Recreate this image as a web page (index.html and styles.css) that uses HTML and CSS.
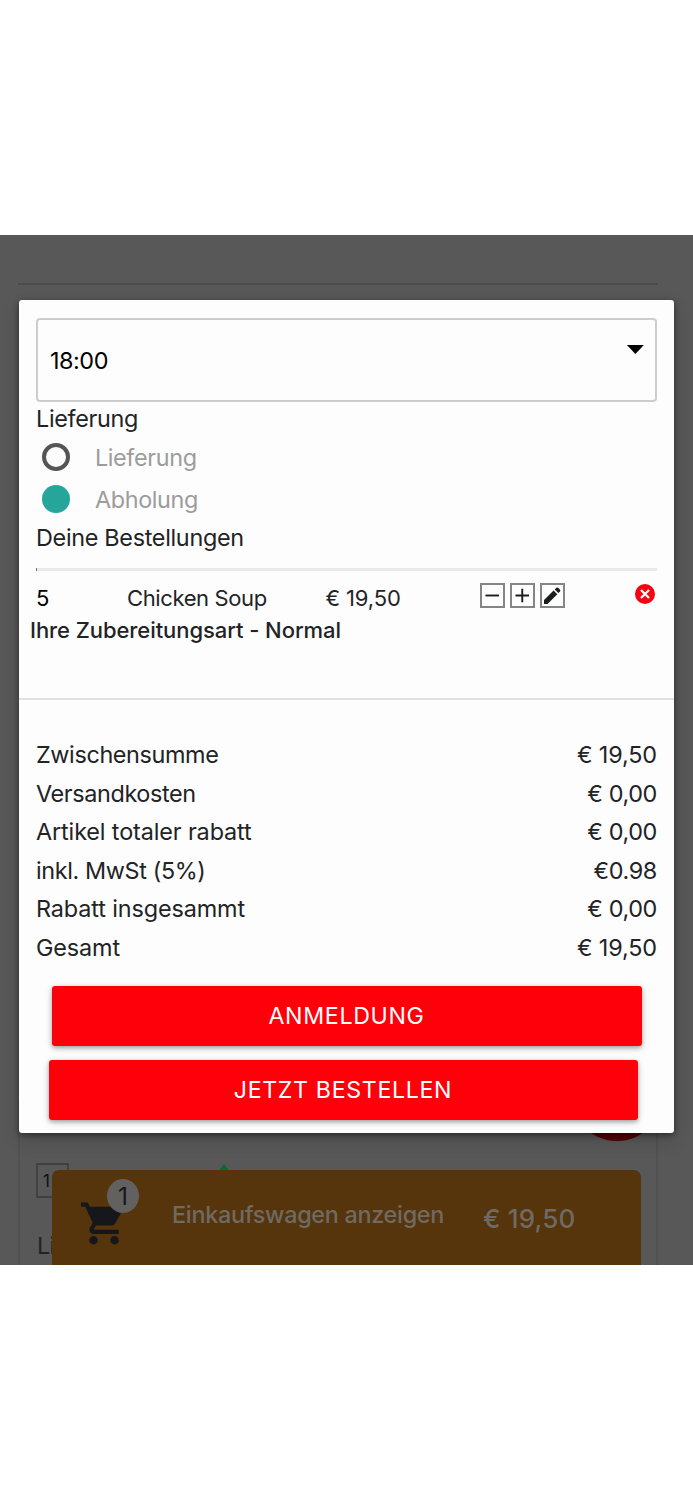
FILE: index.html
```html
<!DOCTYPE html>
<html lang="de">
<head>
<meta charset="utf-8">
<title>Bestellung</title>
<link rel="stylesheet" href="styles.css">
</head>
<body>
<main class="screen">
  <div class="page">
    <div class="page-rule"></div>
    <section class="product">
      <span class="product-add"></span>
      <div class="product-qty">1</div>
      <svg class="product-leaf" viewBox="0 0 12 8"><path d="M6 0 12 8H0z" fill="#096b2b"/></svg>
      <div class="product-note">Lieferung</div>
    </section>
  </div>

  <div class="cartbar">
    <div class="cart">
      <svg class="cart-icon" viewBox="1 2 21 20"><path fill="#15171b" d="M7 18c-1.1 0-1.99.9-1.99 2S5.9 22 7 22s2-.9 2-2-.9-2-2-2zM1 2v2h2l3.6 7.59-1.35 2.45c-.16.28-.25.61-.25.96 0 1.1.9 2 2 2h12v-2H7.42c-.14 0-.25-.11-.25-.25l.03-.12.9-1.63h7.45c.75 0 1.41-.41 1.75-1.03l3.58-6.49A1 1 0 0 0 20 4H5.21l-.94-2H1zm16 16c-1.1 0-1.99.9-1.99 2s.89 2 1.99 2 2-.9 2-2-.9-2-2-2z"/></svg>
      <span class="cart-badge">1</span>
    </div>
    <span class="cart-label">Einkaufswagen anzeigen</span>
    <span class="cart-total">€ 19,50</span>
  </div>

  <section class="modal">
    <div class="select"><span class="select-value">18:00</span><span class="caret"></span></div>
    <div class="heading">Lieferung</div>
    <div class="radio"><span class="dot"></span><span>Lieferung</span></div>
    <div class="radio"><span class="dot dot-on"></span><span>Abholung</span></div>
    <div class="heading orders">Deine Bestellungen</div>
    <div class="bar"></div>
    <div class="item">
      <span class="item-qty">5</span>
      <span class="item-name">Chicken Soup</span>
      <span class="item-price">€ 19,50</span>
      <span class="tools">
        <svg class="tool" viewBox="2 2 21 21"><path d="M5.500 12.500h13.500" stroke="#1c1d1f" stroke-width="1.900"/></svg>
        <svg class="tool" viewBox="2 2 21 21"><path d="M5.500 12.500h13.500M12.250 5.800v13.400" stroke="#1c1d1f" stroke-width="1.900"/></svg>
        <svg class="tool" viewBox="2 2 21 21"><path d="M4 20.900v-3.800L13.600 7.500l3.700 3.700-9.800 9.700zM14.700 6.400l1.700-1.600q1-.8 2 .1l1.500 1.500q1 1 .1 2l-1.600 1.700z" fill="#1c1d1f"/></svg>
      </span>
      <svg class="remove" viewBox="0 0 20 20"><circle cx="10" cy="10" r="10" fill="#f60210"/><path d="M6 6l8 8M14 6l-8 8" stroke="#fff" stroke-width="2.300"/></svg>
    </div>
    <div class="item-note">Ihre Zubereitungsart - Normal</div>
    <div class="divider"></div>
    <div class="totals">
      <div class="line"><span>Zwischensumme</span><span class="sum">€ 19,50</span></div>
      <div class="line"><span>Versandkosten</span><span class="amount">€ 0,00</span></div>
      <div class="line"><span class="wide">Artikel totaler rabatt</span><span class="amount">€ 0,00</span></div>
      <div class="line"><span>inkl. MwSt (5%)</span><span class="amount">€0.98</span></div>
      <div class="line"><span class="wide">Rabatt insgesammt</span><span class="amount">€ 0,00</span></div>
      <div class="line"><span class="wide">Gesamt</span><span class="sum">€ 19,50</span></div>
    </div>
    <div class="button login">ANMELDUNG</div>
    <div class="button order">JETZT BESTELLEN</div>
  </section>
</main>
</body>
</html>
```
FILE: styles.css
```css
* { box-sizing: border-box; }
body {
  margin: 0;
  height: 1500px;
  padding-top: 235px;
  overflow: hidden;
  background: #fff;
  color: #222325;
  font: 400 23.4px/34px Inter, "Liberation Sans", sans-serif;
}
span, div { white-space: nowrap; }
.screen {
  position: relative;
  height: 1030px;
  overflow: hidden;
  background: #585858;
}

/* dimmed page behind the dialog */
.page {
  display: flex;
  flex-direction: column;
  height: 100%;
  padding: 48px 35px 0 18px;
}
.page-rule { height: 2px; background: #4c4c4c; }
.product {
  position: relative;
  margin-top: 815px;
  height: 170px;
  border: solid #515151;
  border-width: 0 2px;
}
.product-add {
  position: absolute;
  right: -7px;
  top: -51px;
  width: 92px;
  height: 92px;
  border-radius: 50%;
  background: #560006;
}
.product-qty {
  position: absolute;
  left: 16px;
  top: 63px;
  width: 33px;
  height: 35px;
  padding-left: 5px;
  border: 2px solid #414141;
  color: #111;
  font-size: 17px;
  line-height: 32px;
}
.product-leaf { position: absolute; left: 198px; top: 64px; width: 12px; height: 8px; }
.product-note { position: absolute; left: 17px; top: 129px; letter-spacing: -.8px; }

.cartbar {
  position: absolute;
  left: 52px;
  top: 935px;
  width: 589px;
  height: 96px;
  display: flex;
  padding-left: 29px;
  border-radius: 7px 7px 0 0;
  background: #56340c;
  color: #6f6a62;
  font-weight: 500;
}
.cart { position: relative; width: 91px; padding-top: 32px; }
.cart-icon { display: block; width: 44px; height: 43px; }
.cart-badge {
  position: absolute;
  left: 26px;
  top: 9px;
  width: 32px;
  height: 34px;
  border-radius: 50%;
  background: #626160;
  color: #16171a;
  font-size: 24.500px;
  font-weight: 400;
  line-height: 34px;
  text-align: center;
}
.cart-label { width: 311px; padding-top: 28px; letter-spacing: -.3px; }
.cart-total { padding-top: 32px; font-size: 26px; letter-spacing: .15px; }

/* dialog */
.modal {
  position: absolute;
  left: 18.500px;
  top: 65px;
  width: 655.900px;
  height: 832.500px;
  padding: 18px 17.500px 0;
  border-radius: 3px;
  background: #fdfdfd;
  box-shadow: 0 2px 6px rgba(0, 0, 0, .45), 0 8px 18px rgba(0, 0, 0, .15);
}
.select {
  display: flex;
  justify-content: space-between;
  height: 84px;
  padding: 24px 11px 0 12px;
  border: 2px solid #cdcdcd;
  border-radius: 4px;
  color: #000;
}
.select-value { letter-spacing: -.45px; }
.caret {
  width: 17px;
  height: 9px;
  margin-top: 1px;
  background: #000;
  clip-path: polygon(0 0, 100% 0, 50% 100%);
}
.heading { height: 34px; letter-spacing: -.31px; }
.radio {
  display: flex;
  align-items: center;
  gap: 24.500px;
  height: 42px;
  padding-left: 6.400px;
  color: #9c9c9c;
  line-height: 35px;
  letter-spacing: -.35px;
}
.dot { width: 28px; height: 28px; border: 4px solid #555; border-radius: 50%; }
.dot-on { border: 0; background: #26a69a; }
.orders { padding-top: 1px; height: 48px; }
.bar { height: 3px; background: #e9e9e9; border-left: 1px solid #777; }
.item {
  display: grid;
  grid-template-columns: 91px 198.500px 154.300px 155.200px 20px;
  height: 44px;
  padding-top: 11px;
  font-size: 22px;
  line-height: 32px;
}
.item-qty { color: #000; }
.item-name { letter-spacing: -.38px; }
.item-price { letter-spacing: -.15px; }
.tools { display: flex; gap: 5px; padding-top: 1px; }
.tool { width: 25px; height: 25px; border: 2px solid #858585; }
.remove { width: 20px; height: 20px; margin-top: 2px; }
.item-note { margin-left: -6px; font-size: 22px; font-weight: 500; line-height: 30px; letter-spacing: -.07px; }
.divider { height: 2px; margin: 53px -17.500px 0; background: #e0e0e0; }
.totals { padding-top: 36px; }
.line {
  display: flex;
  justify-content: space-between;
  height: 38.500px;
  line-height: 38.500px;
  letter-spacing: -.37px;
}
.wide { letter-spacing: -.12px; }
.sum { letter-spacing: -.15px; }
.amount { letter-spacing: -.4px; }
.button {
  width: 590px;
  height: 60px;
  border-radius: 3px;
  background: #fe000a;
  box-shadow: 0 2px 4px rgba(0, 0, 0, .3), 0 2px 10px rgba(0, 0, 0, .12);
  color: #fff;
  font-size: 23.200px;
  font-weight: 400;
  line-height: 61px;
  letter-spacing: .65px;
  text-align: center;
}
.login { margin: 19px 0 0 15.500px; }
.order { margin: 13.500px 0 0 12.500px; width: 589px; }
```
